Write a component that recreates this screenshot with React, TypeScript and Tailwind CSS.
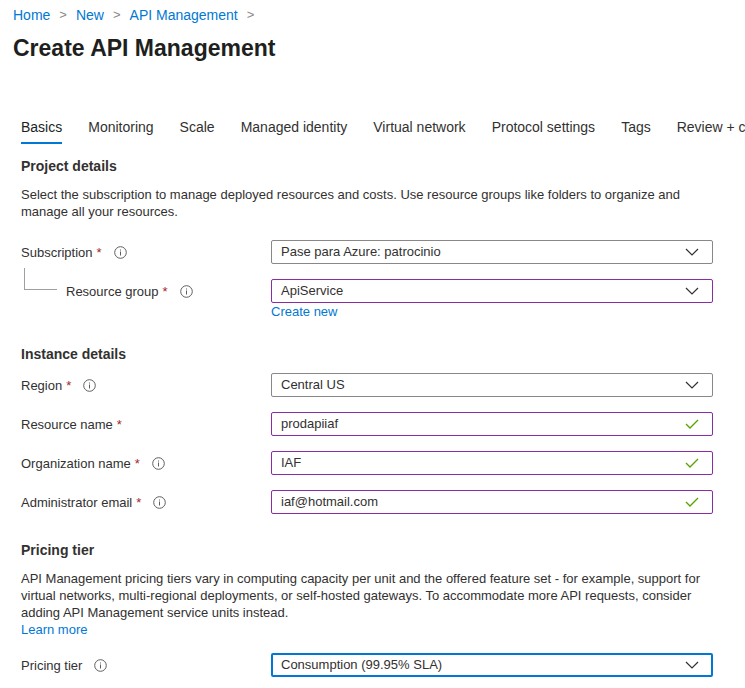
import type { ReactNode } from "react";

const font = { fontFamily: '"Liberation Sans", Arial, sans-serif' };

function Info() {
  return (
    <svg width="13" height="13" viewBox="0 0 13 13" className="shrink-0">
      <circle cx="6.5" cy="6.5" r="5.8" fill="none" stroke="#605e5c" strokeWidth="1" />
      <rect x="6" y="5.5" width="1" height="4" fill="#605e5c" />
      <rect x="6" y="3.5" width="1" height="1" fill="#605e5c" />
    </svg>
  );
}

function Chevron() {
  return (
    <svg width="14" height="8" viewBox="0 0 14 8">
      <path d="M1 1l6 6 6-6" fill="none" stroke="#323130" strokeWidth="1.2" />
    </svg>
  );
}

function Check() {
  return (
    <svg width="14" height="10" viewBox="0 0 14 10">
      <path d="M1 5l4 4 8-8" fill="none" stroke="#57a300" strokeWidth="1.3" />
    </svg>
  );
}

function Label({ text, required, info }: { text: string; required?: boolean; info?: boolean }) {
  return (
    <div className="flex items-center gap-[4px] text-[13px] leading-[15px] text-[#323130]">
      <span>{text}</span>
      {required && <span className="text-[#a4262c]">*</span>}
      {info && (
        <span className="ml-[8px] flex">
          <Info />
        </span>
      )}
    </div>
  );
}

function Field({
  value,
  kind,
  tone,
}: {
  value: string;
  kind: "select" | "input";
  tone: "gray" | "purple" | "blue";
}) {
  const border =
    tone === "gray"
      ? "border border-[#8a8886]"
      : tone === "purple"
      ? "border border-[#8a2da5]"
      : "border-2 border-[#0078d4]";
  return (
    <div
      className={`w-[442px] h-[24px] rounded-[2px] ${border} flex items-center justify-between ${
        tone === "blue" ? "pl-[8px] pr-[12px]" : "pl-[9px] pr-[13px]"
      } text-[13px] text-[#323130]`}
    >
      <span>{value}</span>
      {kind === "select" ? <Chevron /> : <Check />}
    </div>
  );
}

function Row({ label, children, indent }: { label: ReactNode; children: ReactNode; indent?: boolean }) {
  return (
    <div className="flex items-center">
      <div className={`w-[250px] ${indent ? "pl-[45px] relative" : ""}`}>{label}</div>
      {children}
    </div>
  );
}

export default function App() {
  const tabs = [
    "Basics",
    "Monitoring",
    "Scale",
    "Managed identity",
    "Virtual network",
    "Protocol settings",
    "Tags",
    "Review + create",
  ];

  return (
    <div className="w-[745px] h-[688px] overflow-hidden bg-white text-[#323130]" style={font}>
      {/* Breadcrumb */}
      <div className="pl-[13px] pt-[5px] flex items-center gap-[9px] text-[14px] leading-[20px]">
        <span className="text-[#0078d4]">Home</span>
        <span className="text-[#8a8886] text-[13px]">&gt;</span>
        <span className="text-[#0078d4]">New</span>
        <span className="text-[#8a8886] text-[13px]">&gt;</span>
        <span className="text-[#0078d4]">API Management</span>
        <span className="text-[#8a8886] text-[13px]">&gt;</span>
      </div>

      <h1 className="pl-[13px] mt-[7px] text-[23px] leading-[32px] font-semibold text-[#201f1e]">
        Create API Management
      </h1>

      {/* Tabs */}
      <div className="mt-[53px] pl-[21px] flex gap-[26px] whitespace-nowrap text-[14px]">
        {tabs.map((t, i) => (
          <div key={t} className="flex flex-col">
            <span className={`leading-[20px] ${i === 0 ? "text-[#201f1e]" : "text-[#323130]"}`}>{t}</span>
            <div className={`mt-[5px] h-[2px] ${i === 0 ? "bg-[#0078d4]" : "bg-transparent"}`} />
          </div>
        ))}
      </div>

      <div className="px-[21px]">
        <div className="mt-[12px] text-[14px] leading-[20px] font-semibold text-[#323130]">Project details</div>
        <p className="mt-[10px] text-[13px] leading-[17px] text-[#323130] w-[680px]">
          Select the subscription to manage deployed resources and costs. Use resource groups like folders to organize
          and manage all your resources.
        </p>

        <div className="mt-[20px] flex flex-col gap-[15px]">
          <Row label={<Label text="Subscription" required info />}>
            <Field value="Pase para Azure: patrocinio" kind="select" tone="gray" />
          </Row>
          <div className="flex flex-col">
            <Row
              indent
              label={
                <>
                  <div className="absolute left-[3px] top-[-16px] w-[33px] h-[22px] border-l border-b border-[#a19f9d]" />
                  <Label text="Resource group" required info />
                </>
              }
            >
              <Field value="ApiService" kind="select" tone="purple" />
            </Row>
            <div className="pl-[250px] text-[13px] leading-[17px] text-[#0078d4]">Create new</div>
          </div>
        </div>

        <div className="mt-[24px] text-[14px] leading-[20px] font-semibold">Instance details</div>

        <div className="mt-[9px] flex flex-col gap-[15px]">
          <Row label={<Label text="Region" required info />}>
            <Field value="Central US" kind="select" tone="gray" />
          </Row>
          <Row label={<Label text="Resource name" required />}>
            <Field value="prodapiiaf" kind="input" tone="purple" />
          </Row>
          <Row label={<Label text="Organization name" required info />}>
            <Field value="IAF" kind="input" tone="purple" />
          </Row>
          <Row label={<Label text="Administrator email" required info />}>
            <Field value="iaf@hotmail.com" kind="input" tone="purple" />
          </Row>
        </div>

        <div className="mt-[26px] text-[14px] leading-[20px] font-semibold">Pricing tier</div>
        <p className="mt-[10px] text-[13px] leading-[17px] w-[700px]">
          API Management pricing tiers vary in computing capacity per unit and the offered feature set - for example,
          support for virtual networks, multi-regional deployments, or self-hosted gateways. To accommodate more API
          requests, consider adding API Management service units instead.
        </p>
        <div className="text-[13px] leading-[17px] text-[#0078d4]">Learn more</div>

        <div className="mt-[15px]">
          <Row label={<Label text="Pricing tier" info />}>
            <Field value="Consumption (99.95% SLA)" kind="select" tone="blue" />
          </Row>
        </div>
      </div>
    </div>
  );
}
